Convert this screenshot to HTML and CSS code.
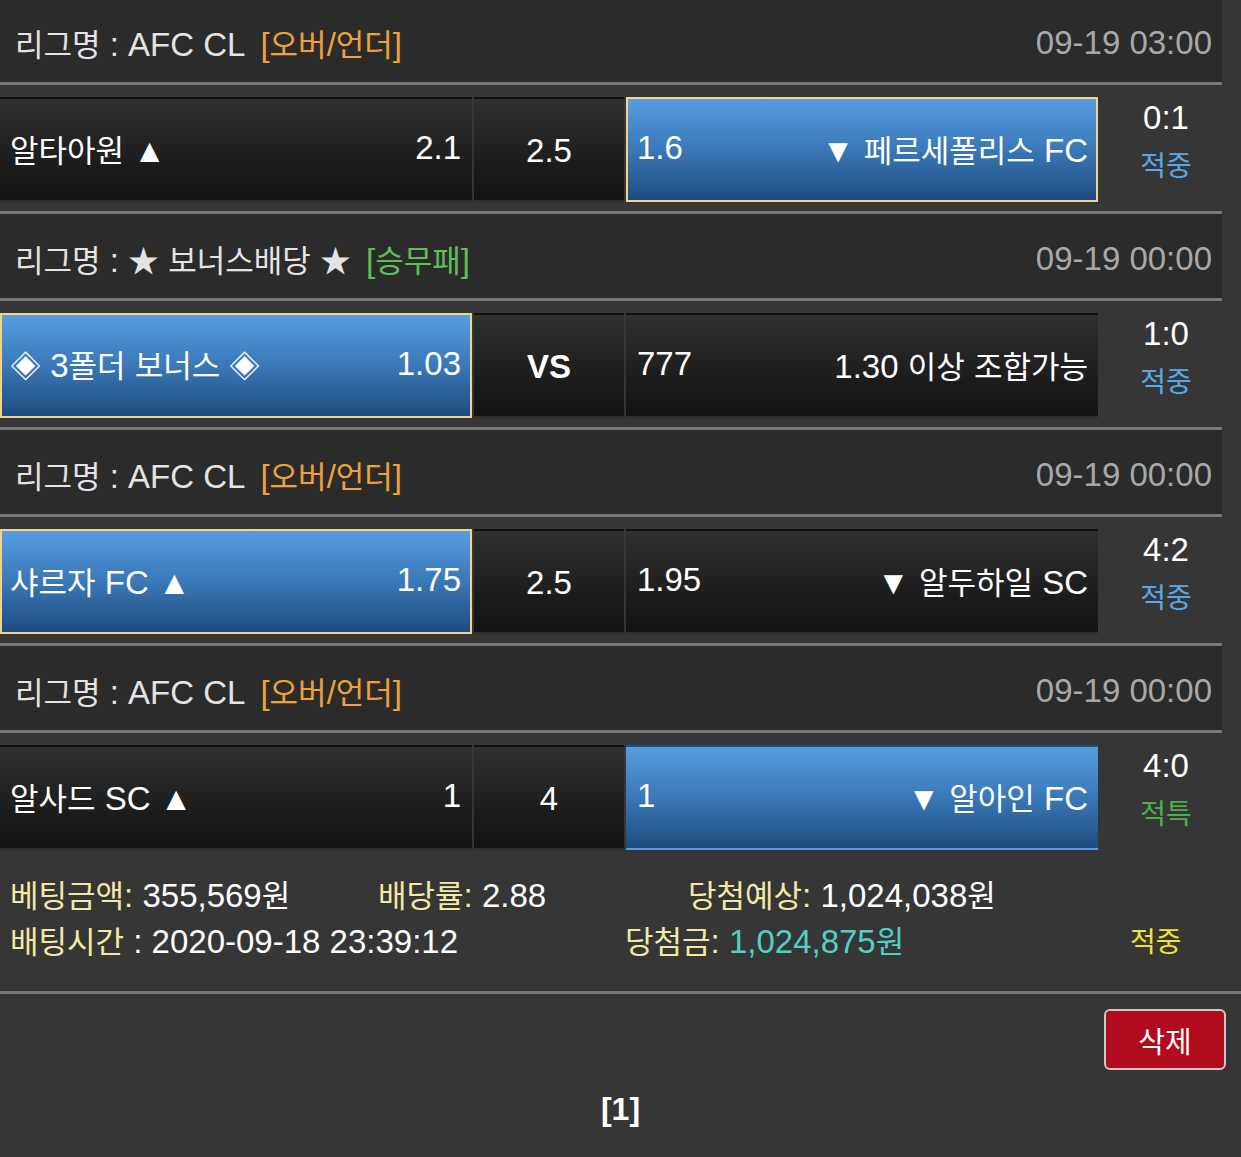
FILE: index.html
```html
<!DOCTYPE html>
<html lang="ko">
<head>
<meta charset="utf-8">
<title>배팅내역</title>
<link rel="stylesheet" href="styles.css">
</head>
<body>
<div class="list">

  <div class="match">
    <div class="mh">
      <div class="league"><span class="k">리그명</span> : AFC CL<span class="tag orange">[<span class="k">오버</span>/<span class="k">언더</span>]</span></div>
      <div class="date">09-19 03:00</div>
    </div>
    <div class="mrow">
      <div class="cell home"><span><span class="k">알타아원</span> ▲</span><span>2.1</span></div>
      <div class="cell mid">2.5</div>
      <div class="cell away blue picked"><span>1.6</span><span>▼ <span class="k">페르세폴리스</span> FC</span></div>
      <div class="score"><div>0:1</div><div class="res hit">적중</div></div>
    </div>
  </div>

  <div class="match">
    <div class="mh">
      <div class="league"><span class="k">리그명</span> : <span class="k">★</span> <span class="k">보너스배당</span> <span class="k">★</span><span class="tag green">[<span class="k">승무패</span>]</span></div>
      <div class="date">09-19 00:00</div>
    </div>
    <div class="mrow">
      <div class="cell home blue picked"><span><span class="k">◈</span> 3<span class="k">폴더</span> <span class="k">보너스</span> <span class="k">◈</span></span><span>1.03</span></div>
      <div class="cell mid bold">VS</div>
      <div class="cell away"><span>777</span><span>1.30 <span class="k">이상</span> <span class="k">조합가능</span></span></div>
      <div class="score"><div>1:0</div><div class="res hit">적중</div></div>
    </div>
  </div>

  <div class="match">
    <div class="mh">
      <div class="league"><span class="k">리그명</span> : AFC CL<span class="tag orange">[<span class="k">오버</span>/<span class="k">언더</span>]</span></div>
      <div class="date">09-19 00:00</div>
    </div>
    <div class="mrow">
      <div class="cell home blue picked"><span><span class="k">샤르자</span> FC ▲</span><span>1.75</span></div>
      <div class="cell mid">2.5</div>
      <div class="cell away"><span>1.95</span><span>▼ <span class="k">알두하일</span> SC</span></div>
      <div class="score"><div>4:2</div><div class="res hit">적중</div></div>
    </div>
  </div>

  <div class="match last">
    <div class="mh">
      <div class="league"><span class="k">리그명</span> : AFC CL<span class="tag orange">[<span class="k">오버</span>/<span class="k">언더</span>]</span></div>
      <div class="date">09-19 00:00</div>
    </div>
    <div class="mrow">
      <div class="cell home"><span><span class="k">알사드</span> SC ▲</span><span>1</span></div>
      <div class="cell mid">4</div>
      <div class="cell away blue"><span>1</span><span>▼ <span class="k">알아인</span> FC</span></div>
      <div class="score"><div>4:0</div><div class="res special">적특</div></div>
    </div>
  </div>

</div>

<div class="summary">
  <div class="srow one">
    <div><span class="lbl k">베팅금액</span><span class="lbl">:</span> 355,569<span class="k">원</span></div>
    <div><span class="lbl k">배당률</span><span class="lbl">:</span> 2.88</div>
    <div><span class="lbl k">당첨예상</span><span class="lbl">:</span> 1,024,038<span class="k">원</span></div>
  </div>
  <div class="srow two">
    <div><span class="lbl k">배팅시간</span> : 2020-09-18 23:39:12</div>
    <div><span class="lbl k">당첨금</span><span class="lbl">:</span> <span class="teal">1,024,875<span class="k">원</span></span></div>
    <div class="final k">적중</div>
  </div>
</div>

<div class="actions">
  <button class="del" type="button">삭제</button>
</div>
<div class="pager">[1]</div>
</body>
</html>
```

FILE: styles.css
```css
* { box-sizing: border-box; }

body {
  margin: 0;
  background: #363636;
  color: #fff;
  font-family: "Liberation Sans", "Noto Sans CJK KR", sans-serif;
  font-size: 33px;
}

.k {
  font-family: "Noto Sans CJK KR", sans-serif;
  font-size: 31px;
}

.list {
  width: 1222px;
  margin-top: -2px;
}

.mh {
  height: 87px;
  background: #2b2b2b;
  border-bottom: 3px solid #787878;
  display: flex;
  align-items: center;
  justify-content: space-between;
  padding: 5px 10px 0 15px;
  white-space: nowrap;
}

.league { color: #e4e4e4; }
.tag { margin-left: 15px; }
.orange { color: #eea23d; }
.green { color: #5fbf56; }
.date { color: #a8a8a8; }

.mrow {
  height: 129px;
  display: grid;
  grid-template-columns: 472px 150px 472px 1fr;
  column-gap: 2px;
  padding: 12px 0 9px;
  border-bottom: 3px solid #787878;
}

.match.last .mrow {
  height: 117px;
  padding-bottom: 0;
  border-bottom: none;
}

.cell {
  height: 105px;
  display: flex;
  align-items: center;
  justify-content: space-between;
  border: 2px solid transparent;
  background: linear-gradient(#2f2f2f, #121212);
  white-space: nowrap;
}

.home { padding: 0 9px 3px 8px; }
.away { padding: 0 8px 3px 9px; }
.mid { justify-content: center; padding-top: 2px; }
.bold { font-weight: bold; }

.blue {
  background: linear-gradient(#569ddf, #3a78b8 50%, #1e4b7f);
}
.picked { border-color: #f1d489; }

.score {
  margin-top: -2px;
  text-align: center;
  line-height: 46px;
  padding-left: 10px;
}
.res { font-family: "Noto Sans CJK KR", sans-serif; font-size: 28px; }
.hit { color: #5aa8e6; }
.special { color: #4cae4c; }

.summary {
  padding: 22px 0 27px;
  border-bottom: 3px solid #787878;
  line-height: 44px;
  white-space: nowrap;
}
.srow { display: grid; padding-left: 10px; }
.srow.one { grid-template-columns: 368px 310px 1fr; }
.srow.two { grid-template-columns: 615px 505px 1fr; }
.lbl { color: #f3e9a4; }
.teal { color: #4fd1c5; }
.final { color: #f2e233; font-size: 28px; }

.actions {
  display: flex;
  justify-content: flex-end;
  padding: 15px 15px 0;
}
.del {
  width: 122px;
  height: 61px;
  background: #b00c1e;
  border: 2px solid #c9c9c9;
  border-radius: 6px;
  color: #fff;
  font-family: "Noto Sans CJK KR", sans-serif;
  font-size: 29px;
  padding: 0;
}

.pager {
  margin-top: 19px;
  text-align: center;
  font-weight: bold;
  font-size: 32px;
  line-height: 40px;
}
```
